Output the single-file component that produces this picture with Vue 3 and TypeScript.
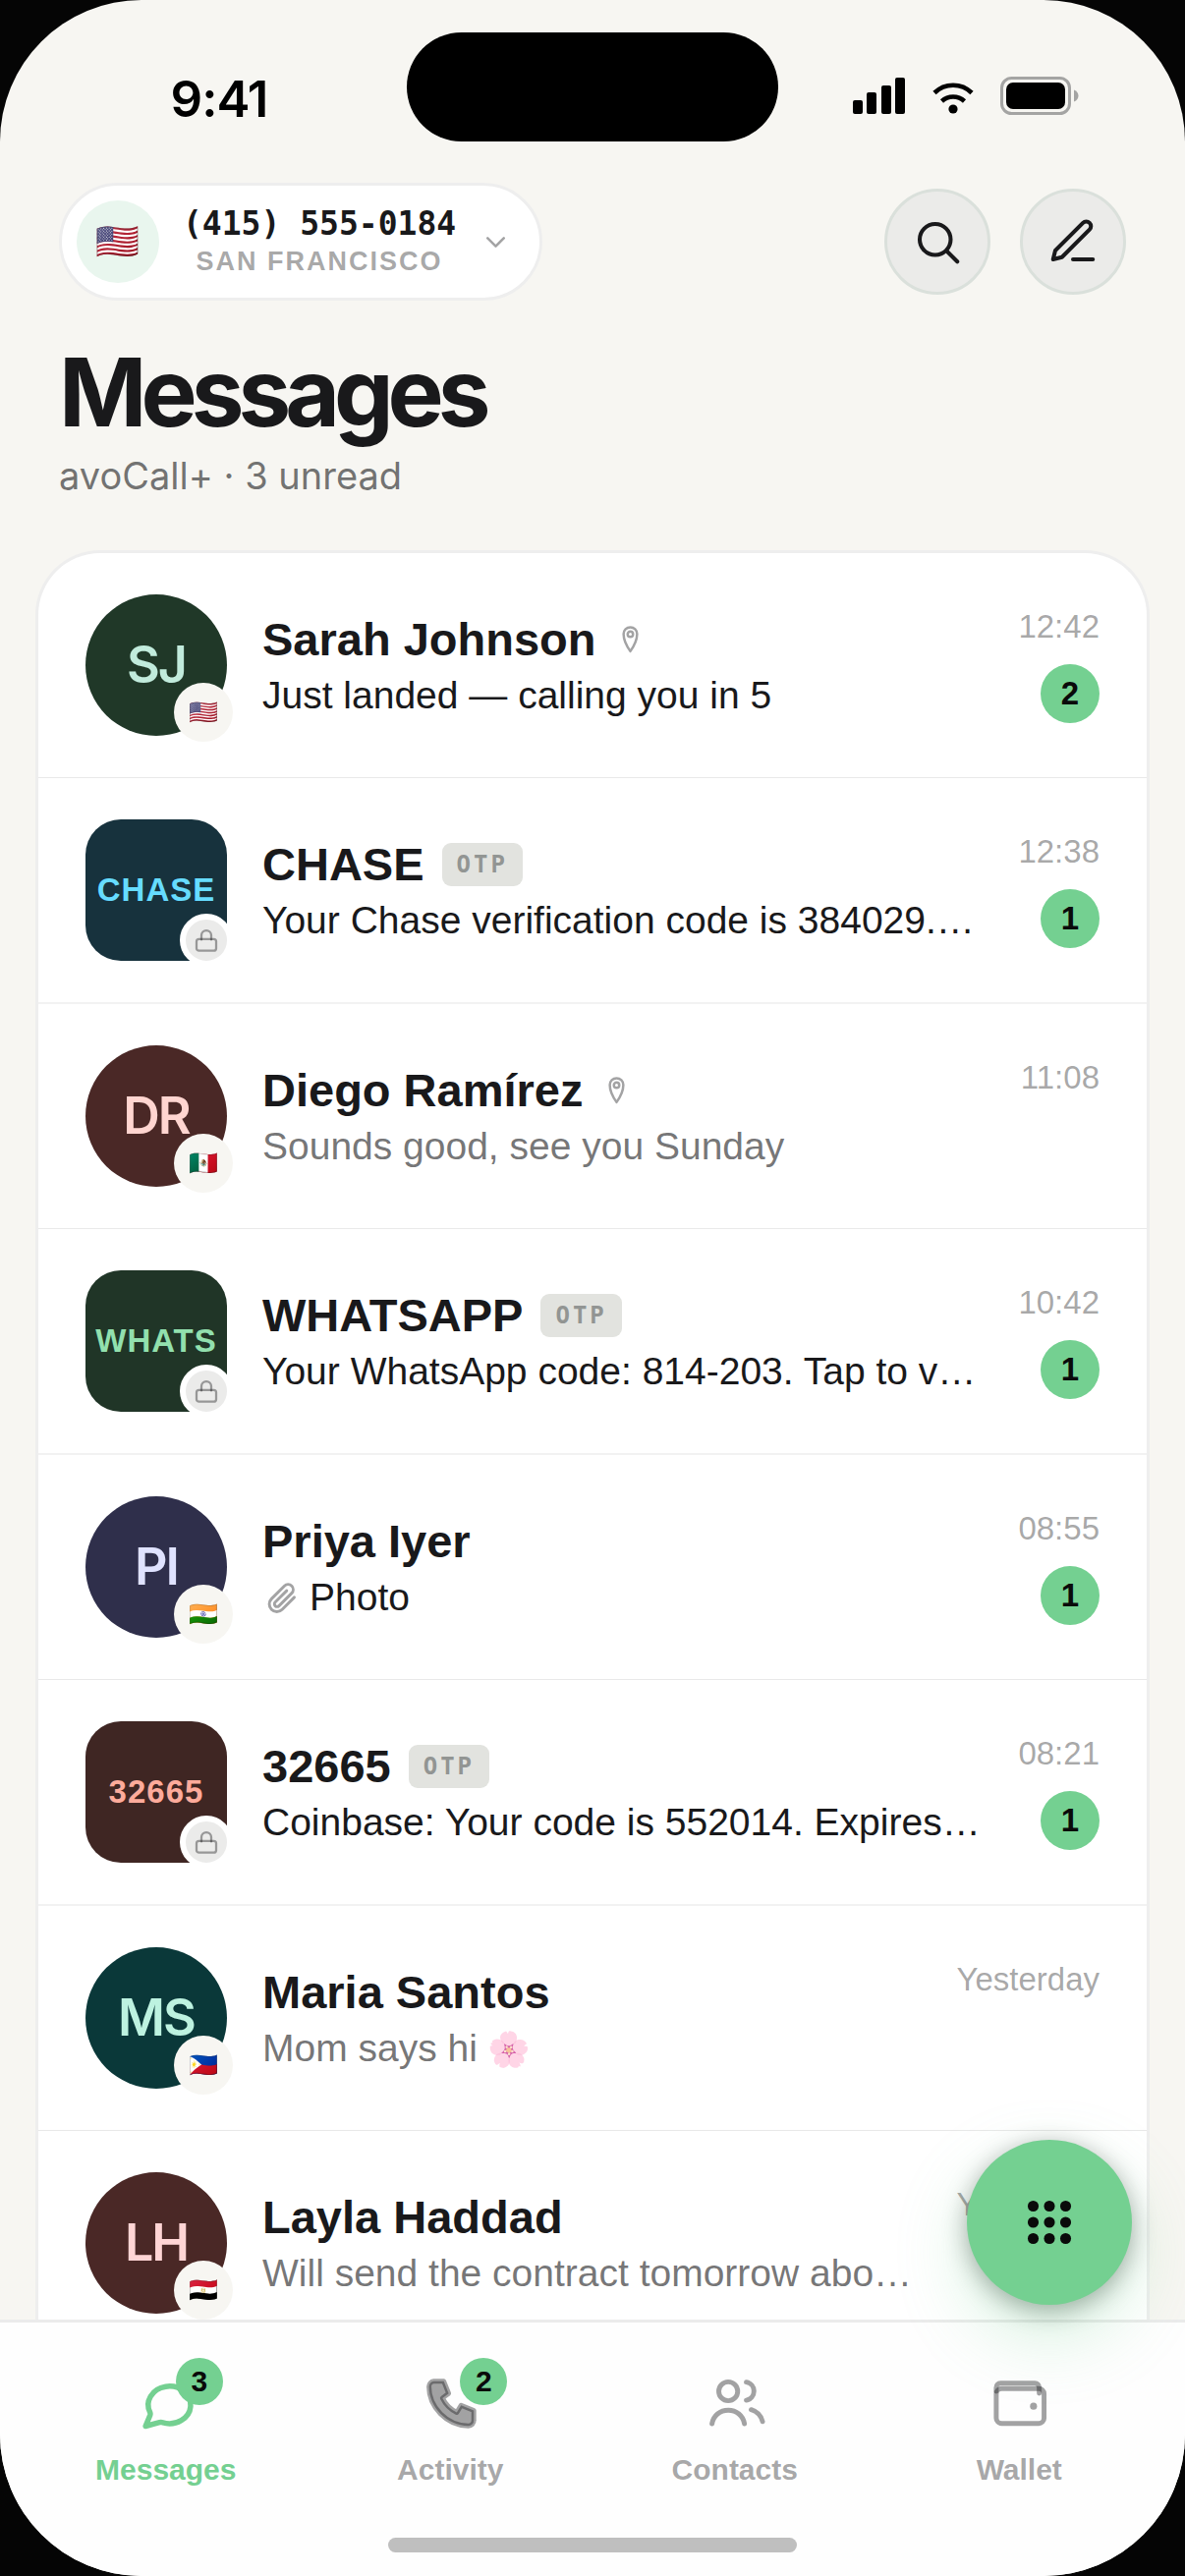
<script setup lang="ts">
interface Conversation {
  name: string
  avatar: string
  kind: 'person' | 'service'
  bg: string
  fg: string
  flag?: string
  pinned?: boolean
  otp?: boolean
  attachment?: boolean
  preview: string
  emoji?: string
  time: string
  unread?: number
}

interface Tab {
  id: 'messages' | 'activity' | 'contacts' | 'wallet'
  label: string
  badge?: number
}

const conversations: Conversation[] = [
  { name: 'Sarah Johnson', avatar: 'SJ', kind: 'person', bg: '#203828', fg: '#c1ebdc', flag: '🇺🇸', pinned: true, preview: 'Just landed — calling you in 5', time: '12:42', unread: 2 },
  { name: 'CHASE', avatar: 'CHASE', kind: 'service', bg: '#17323d', fg: '#66dcff', otp: true, preview: 'Your Chase verification code is 384029.…', time: '12:38', unread: 1 },
  { name: 'Diego Ramírez', avatar: 'DR', kind: 'person', bg: '#4a2826', fg: '#ffd5d0', flag: '🇲🇽', pinned: true, preview: 'Sounds good, see you Sunday', time: '11:08' },
  { name: 'WHATSAPP', avatar: 'WHATS', kind: 'service', bg: '#203527', fg: '#92e0ae', otp: true, preview: 'Your WhatsApp code: 814-203. Tap to v…', time: '10:42', unread: 1 },
  { name: 'Priya Iyer', avatar: 'PI', kind: 'person', bg: '#2f2f4b', fg: '#dfe2ff', flag: '🇮🇳', attachment: true, preview: 'Photo', time: '08:55', unread: 1 },
  { name: '32665', avatar: '32665', kind: 'service', bg: '#3f2623', fg: '#fdab9b', otp: true, preview: 'Coinbase: Your code is 552014. Expires…', time: '08:21', unread: 1 },
  { name: 'Maria Santos', avatar: 'MS', kind: 'person', bg: '#0a3839', fg: '#bdf2e0', flag: '🇵🇭', preview: 'Mom says hi', emoji: '🌸', time: 'Yesterday' },
  { name: 'Layla Haddad', avatar: 'LH', kind: 'person', bg: '#4a2826', fg: '#ffd5d5', flag: '🇪🇬', preview: 'Will send the contract tomorrow abo…', time: 'Yesterday' },
]

const tabs: Tab[] = [
  { id: 'messages', label: 'Messages', badge: 3 },
  { id: 'activity', label: 'Activity', badge: 2 },
  { id: 'contacts', label: 'Contacts' },
  { id: 'wallet', label: 'Wallet' },
]

const activeTab: Tab['id'] = 'messages'
const keypadSteps = [0, 1, 2]
</script>

<template>
  <div class="screen">
    <div class="status">
      <div class="clock">9:41</div>
      <div class="island"></div>
      <div class="indicators">
        <svg width="54" height="38" viewBox="0 0 54 38" aria-hidden="true">
          <rect x="0" y="23" width="10" height="14" rx="2" />
          <rect x="14" y="15" width="10" height="22" rx="2" />
          <rect x="29" y="8" width="10" height="29" rx="2" />
          <rect x="43" y="0" width="10" height="37" rx="2" />
        </svg>
        <svg width="42" height="38" viewBox="0 0 42 38" aria-hidden="true">
          <path d="M2 15.500a27 27 0 0 1 38 0M9.500 24a17 17 0 0 1 23 0" fill="none" stroke="#000" stroke-width="4.600" />
          <circle cx="21" cy="32" r="4.600" />
        </svg>
        <svg width="80" height="40" viewBox="0 0 80 40" aria-hidden="true">
          <rect x="1.500" y="1.500" width="69" height="36" rx="10" fill="none" stroke="#a4a4a3" stroke-width="3" />
          <rect x="6" y="6" width="60" height="27" rx="7" />
          <path d="M75 13.500c6 2 6 10 0 12z" fill="#a4a4a3" />
        </svg>
      </div>
    </div>

    <header class="header">
      <div class="toolbar">
        <button class="line-picker" type="button">
          <span class="line-flag">🇺🇸</span>
          <span class="line-text">
            <span class="line-number">(415) 555-0184</span>
            <span class="line-city">SAN FRANCISCO</span>
          </span>
          <svg class="chevron" width="33" height="33" viewBox="0 0 24 24" aria-hidden="true"><path d="M6 9l6 6 6-6" /></svg>
        </button>
        <div class="actions">
          <button class="round" type="button" aria-label="Search">
            <svg width="54" height="54" viewBox="0 0 24 24" aria-hidden="true">
              <circle cx="11" cy="11" r="7" />
              <path d="M21 21l-4.800-4.800" />
            </svg>
          </button>
          <button class="round" type="button" aria-label="New message">
            <svg width="54" height="54" viewBox="0 0 24 24" aria-hidden="true">
              <path d="M12 20h9" />
              <path d="M16.500 3.500a2.121 2.121 0 0 1 3 3L7 19l-4 1 1-4L16.500 3.500z" />
            </svg>
          </button>
        </div>
      </div>
      <h1 class="title">Messages</h1>
      <p class="subtitle">avoCall+ · 3 unread</p>
    </header>

    <main class="content">
      <ul class="list">
        <li v-for="c in conversations" :key="c.name" class="row">
          <div class="avatar" :class="c.kind" :style="{ background: c.bg, color: c.fg }">
            {{ c.avatar }}
            <span v-if="c.flag" class="flag">{{ c.flag }}</span>
            <span v-else class="lock">
              <svg width="30" height="30" viewBox="0 0 24 24" aria-hidden="true">
                <rect x="4" y="11" width="16" height="9.500" rx="2" />
                <path d="M8 11.500V8a4 4 0 0 1 8 0v3.500" />
              </svg>
            </span>
          </div>
          <div class="body">
            <div class="name-line">
              <span class="name">{{ c.name }}</span>
              <svg v-if="c.pinned" class="pin" width="33" height="33" viewBox="0 0 24 24" aria-hidden="true">
                <path d="M12 21S7 14 7 8.200a5 5 0 0 1 10 0C17 14 12 21 12 21z" />
                <circle cx="12" cy="8.400" r="2" />
              </svg>
              <span v-if="c.otp" class="otp">OTP</span>
            </div>
            <div class="preview" :class="{ unread: c.unread }">
              <svg v-if="c.attachment" class="clip" width="39" height="39" viewBox="0 0 24 24" aria-hidden="true">
                <path d="M20 11.600l-7.600 7.600a4.700 4.700 0 0 1-6.660-6.660l8.100-8.100a3.200 3.200 0 0 1 4.540 4.540l-8 8a1.600 1.600 0 0 1-2.320-2.320l7.200-7.200" />
              </svg>
              <span>{{ c.preview }}<template v-if="c.emoji">&nbsp;<span class="emoji">{{ c.emoji }}</span></template></span>
            </div>
          </div>
          <div class="meta">
            <time class="time">{{ c.time }}</time>
            <span v-if="c.unread" class="count">{{ c.unread }}</span>
          </div>
        </li>
      </ul>
      <button class="fab" type="button" aria-label="Open keypad">
        <svg width="72" height="72" viewBox="0 0 24 24" aria-hidden="true">
          <template v-for="r in keypadSteps" :key="r">
            <circle v-for="k in keypadSteps" :key="k" :cx="6.5 + k * 5.5" :cy="6.5 + r * 5.5" r="1.850" />
          </template>
        </svg>
      </button>
    </main>

    <nav class="tabs">
      <div class="tab-row">
        <a v-for="t in tabs" :key="t.id" class="tab" :class="{ active: t.id === activeTab }" :href="'#' + t.id">
          <span class="tab-icon">
            <svg width="66" height="66" viewBox="0 0 24 24" aria-hidden="true">
              <path v-if="t.id === 'messages'" d="M4.400 20.900l1.700-4.100c.1-.3.1-.6 0-.9A7.850 6.900 0 1 1 10.800 19.600c-.4-.2-.8-.2-1.200-.1z" />
              <path v-else-if="t.id === 'activity'" fill="currentColor" d="M6 4.300h3.700l1.800 4.500-2.300 1.700a11.500 11.500 0 0 0 5.300 5.300l1.600-2.600 4.700 1.900v3.600a2 2 0 0 1-2 2.100C10.800 20.800 4.200 13.800 4.200 6.300a2 2 0 0 1 1.800-2z" />
              <template v-else-if="t.id === 'contacts'">
                <circle cx="9.500" cy="8" r="3.500" />
                <path d="M3.500 20c.500-3 3-5 6-5s5.500 2 6 5" />
                <path d="M16.200 4.600a3.400 3.400 0 0 1 0 6.700" />
                <path d="M18 14.800c2.200.700 3.700 2.200 4.200 4.400" />
              </template>
              <template v-else>
                <rect x="3.600" y="7" width="17.700" height="12.900" rx="2" />
                <path d="M3.600 8V6.600a1.600 1.600 0 0 1 1.600-1.600h12.700a1.600 1.600 0 0 1 1.600 1.600v2.100" />
                <circle cx="17.400" cy="13.500" r="1.300" fill="currentColor" stroke="none" />
              </template>
            </svg>
            <span v-if="t.badge" class="tab-badge">{{ t.badge }}</span>
          </span>
          <span class="tab-label">{{ t.label }}</span>
        </a>
      </div>
      <div class="home-bar"></div>
    </nav>
  </div>
</template>

<style>
body {
  margin: 0;
  background: #050505;
}
</style>

<style scoped>
.screen {
  --ink: #19191b;
  --soft: rgba(26, 26, 28, 0.62);
  --muted: rgba(26, 26, 28, 0.4);
  --green: #74d091;
  --line: #eeeeee;
  --paper: #f7f6f2;
  display: flex;
  flex-direction: column;
  height: 100vh;
  overflow: hidden;
  border-radius: 144px;
  background: var(--paper);
  color: var(--ink);
  font-family: "Liberation Sans", Arial, "Noto Color Emoji", sans-serif;
}

svg {
  display: block;
  flex: none;
}

button {
  margin: 0;
  font: inherit;
  color: inherit;
  cursor: pointer;
}

/* Status bar */
.status {
  display: grid;
  grid-template-columns: 1fr 378px 1fr;
  align-items: center;
  padding: 33px 32px 0;
}

.clock {
  padding-top: 24px;
  text-align: center;
  color: #000;
  font: 600 51px/60px Inter, sans-serif;
  letter-spacing: -1px;
}

.island {
  height: 111px;
  border-radius: 56px;
  background: #000;
}

.indicators {
  display: flex;
  align-items: center;
  justify-content: center;
  gap: 27px;
  padding-top: 18px;
}

/* Header */
.header {
  padding: 42px 60px 52px;
}

.toolbar {
  display: flex;
  align-items: center;
  justify-content: space-between;
}

.line-picker {
  display: flex;
  align-items: center;
  gap: 24px;
  box-sizing: border-box;
  height: 120px;
  padding: 0 28px 0 15px;
  border: 3px solid var(--line);
  border-radius: 60px;
  background: #fff;
}

.line-flag {
  display: flex;
  align-items: center;
  justify-content: center;
  width: 84px;
  height: 84px;
  border-radius: 50%;
  background: #e9f6ee;
  font-size: 36px;
  line-height: 42px;
}

.line-text {
  display: flex;
  flex-direction: column;
  align-items: center;
}

.line-number {
  font: 700 33px/40px "DejaVu Sans Mono", monospace;
}

.line-city {
  color: var(--muted);
  font-size: 27px;
  font-weight: 700;
  line-height: 36px;
  letter-spacing: 2px;
}

.chevron {
  fill: none;
  stroke: var(--muted);
  stroke-width: 1.8;
  stroke-linecap: round;
  stroke-linejoin: round;
}

.actions {
  display: flex;
  gap: 30px;
}

.round {
  display: flex;
  align-items: center;
  justify-content: center;
  box-sizing: border-box;
  width: 108px;
  height: 108px;
  padding: 0;
  border: 3px solid #dae0db;
  border-radius: 50%;
  background: #ebebe9;
}

.round svg {
  fill: none;
  stroke: var(--ink);
  stroke-width: 1.8;
  stroke-linecap: round;
  stroke-linejoin: round;
}

.title {
  margin: 39px 0 7px;
  font: 700 96px/108px Inter, sans-serif;
  letter-spacing: -6px;
}

.subtitle {
  margin: 0;
  color: var(--soft);
  font: 400 38px/48px Inter, sans-serif;
}

/* Conversation list */
.content {
  position: relative;
  flex: 1;
  min-height: 0;
  padding: 0 36px;
}

.list {
  box-sizing: border-box;
  height: 100%;
  margin: 0;
  padding: 0;
  overflow: hidden;
  border: 3px solid var(--line);
  border-bottom: 0;
  border-radius: 66px 66px 0 0;
  background: #fff;
  list-style: none;
}

.row {
  display: flex;
  align-items: center;
  gap: 36px;
  padding: 42px 48px;
  border-bottom: 1px solid #e9e9e9;
}

.row:nth-child(even) {
  border-bottom: 2px solid #f2f2f2;
}

.avatar {
  position: relative;
  display: flex;
  flex: none;
  align-items: center;
  justify-content: center;
  width: 144px;
  height: 144px;
}

.person {
  border-radius: 50%;
  font: 600 52px/60px Inter, sans-serif;
  letter-spacing: -2px;
}

.service {
  border-radius: 36px;
  font-size: 33px;
  font-weight: 700;
  line-height: 40px;
  letter-spacing: 1px;
}

.flag {
  position: absolute;
  right: -6px;
  bottom: -6px;
  display: flex;
  align-items: center;
  justify-content: center;
  width: 60px;
  height: 60px;
  border-radius: 50%;
  background: var(--paper);
  font: 24px/30px "Noto Color Emoji", sans-serif;
  letter-spacing: 0;
}

.lock {
  position: absolute;
  right: -6px;
  bottom: -6px;
  display: flex;
  align-items: center;
  justify-content: center;
  width: 42px;
  height: 42px;
  border: 6px solid #fff;
  border-radius: 50%;
  background: #ebebea;
}

.lock svg,
.pin,
.clip {
  fill: none;
  stroke: var(--muted);
  stroke-width: 1.8;
  stroke-linecap: round;
  stroke-linejoin: round;
}

.body {
  display: flex;
  flex: 1;
  flex-direction: column;
  gap: 5px;
  min-width: 0;
}

.name-line {
  display: flex;
  align-items: center;
  gap: 18px;
}

.name {
  font-size: 47px;
  font-weight: 700;
  line-height: 57px;
  white-space: nowrap;
}

.otp {
  padding: 0 15px;
  border-radius: 9px;
  background: #e2e3df;
  color: #929593;
  font: 700 24px/44px "DejaVu Sans Mono", monospace;
  letter-spacing: 3px;
}

.preview {
  display: flex;
  align-items: center;
  gap: 9px;
  color: var(--soft);
  font-size: 39px;
  line-height: 48px;
  white-space: nowrap;
}

.preview.unread {
  color: var(--ink);
}

.emoji {
  font-size: 35px;
}

.meta {
  display: flex;
  flex: none;
  flex-direction: column;
  align-items: flex-end;
  gap: 20px;
  min-height: 117px;
}

.time {
  color: var(--muted);
  font-size: 33px;
  line-height: 37px;
}

.count {
  width: 60px;
  border-radius: 30px;
  background: var(--green);
  color: #0a0a0a;
  font-size: 33px;
  font-weight: 700;
  line-height: 60px;
  text-align: center;
}

/* Floating keypad button */
.fab {
  position: absolute;
  right: 54px;
  bottom: 15px;
  z-index: 2;
  display: flex;
  align-items: center;
  justify-content: center;
  width: 168px;
  height: 168px;
  padding: 0;
  border: 0;
  border-radius: 50%;
  background: var(--green);
  box-shadow: 0 30px 72px rgba(116, 208, 145, 0.3), 0 6px 24px rgba(0, 0, 0, 0.35);
}

.fab svg {
  fill: #0a0a0a;
}

/* Tab bar */
.tabs {
  border-top: 3px solid #ebebeb;
  background: #fefefe;
}

.tab-row {
  display: grid;
  grid-template-columns: repeat(4, 1fr);
  padding: 48px 24px 51px;
}

.tab {
  display: flex;
  flex-direction: column;
  align-items: center;
  gap: 18px;
  color: var(--muted);
  text-decoration: none;
}

.tab.active {
  color: var(--green);
}

.tab-icon {
  position: relative;
}

.tab-icon svg {
  fill: none;
  stroke: currentColor;
  stroke-width: 1.8;
  stroke-linecap: round;
  stroke-linejoin: round;
}

.active svg {
  stroke-width: 2;
}

.tab-badge {
  position: absolute;
  top: -12px;
  right: -25px;
  width: 48px;
  border-radius: 24px;
  background: var(--green);
  color: #0a0a0a;
  font-size: 30px;
  font-weight: 700;
  line-height: 48px;
  text-align: center;
}

.tab-label {
  font-size: 30px;
  font-weight: 700;
  line-height: 36px;
}

.home-bar {
  width: 416px;
  height: 15px;
  margin: 0 auto 24px;
  border-radius: 8px;
  background: #bfbfbf;
}
</style>
